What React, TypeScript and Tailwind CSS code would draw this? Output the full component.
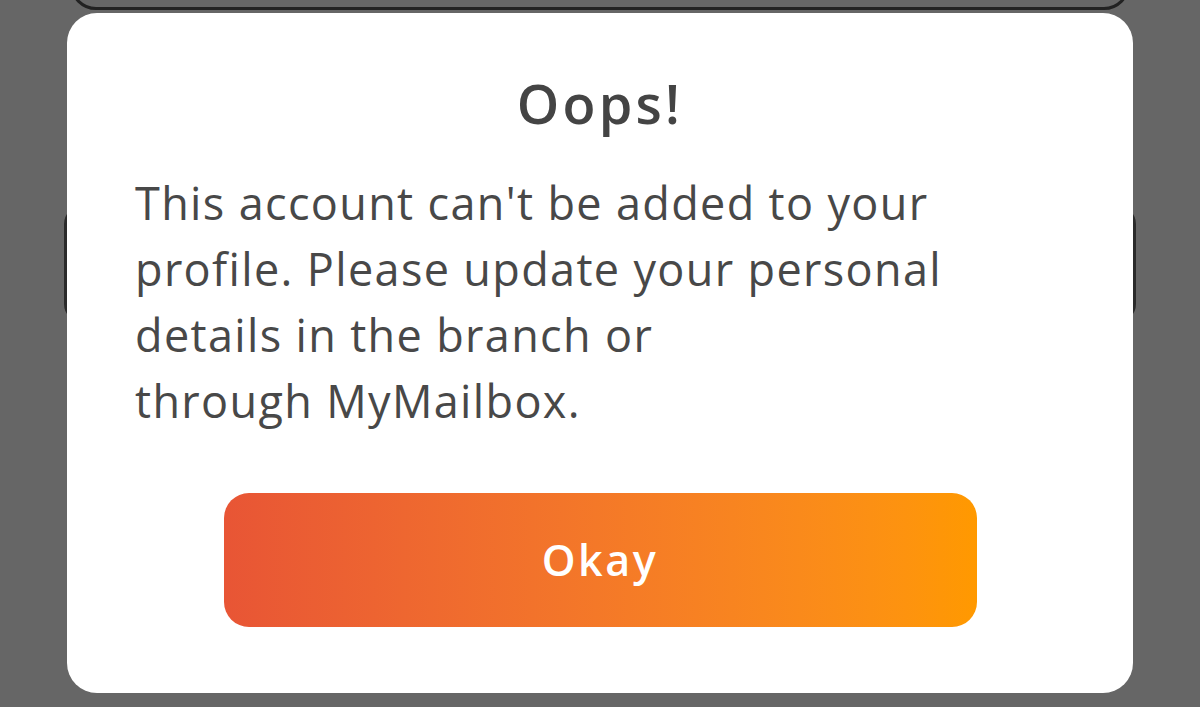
export default function App() {
  const lines = [
    "This account can't be added to your",
    "profile. Please update your personal",
    "details in the branch or",
    "through MyMailbox.",
  ];

  return (
    <div className="relative w-full h-[707px] bg-[#666666] overflow-hidden font-['Open_Sans',sans-serif]">
      {/* content behind the dialog */}
      <div className="absolute left-[70px] right-[70px] top-[-40px] h-[50px] rounded-b-[26px] border-[3px] border-[#222222]" />
      <div className="absolute left-[64px] right-[64px] top-[206px] h-[116px] rounded-[18px] border-[3px] border-[#2a2a2a]" />

      {/* dialog */}
      <div className="absolute left-[67px] right-[67px] top-[13px] bottom-[14px] rounded-[30px] bg-white flex flex-col">
        <h2 className="pt-[63px] text-center text-[54px] leading-none font-semibold tracking-[0.06em] text-[#444444]">
          Oops!
        </h2>
        <p className="mt-[40px] pl-[68px] text-[45px] leading-[66px] tracking-[0.03em] text-[#484848]">
          {lines.map((l, i) => (
            <span key={i} className="block">
              {l}
            </span>
          ))}
        </p>
        <button className="mt-[59px] mx-auto w-[753px] h-[134px] rounded-[25px] bg-gradient-to-r from-[#e85535] to-[#ff9900] text-white text-[43px] font-semibold tracking-[0.06em]">
          Okay
        </button>
      </div>
    </div>
  );
}
